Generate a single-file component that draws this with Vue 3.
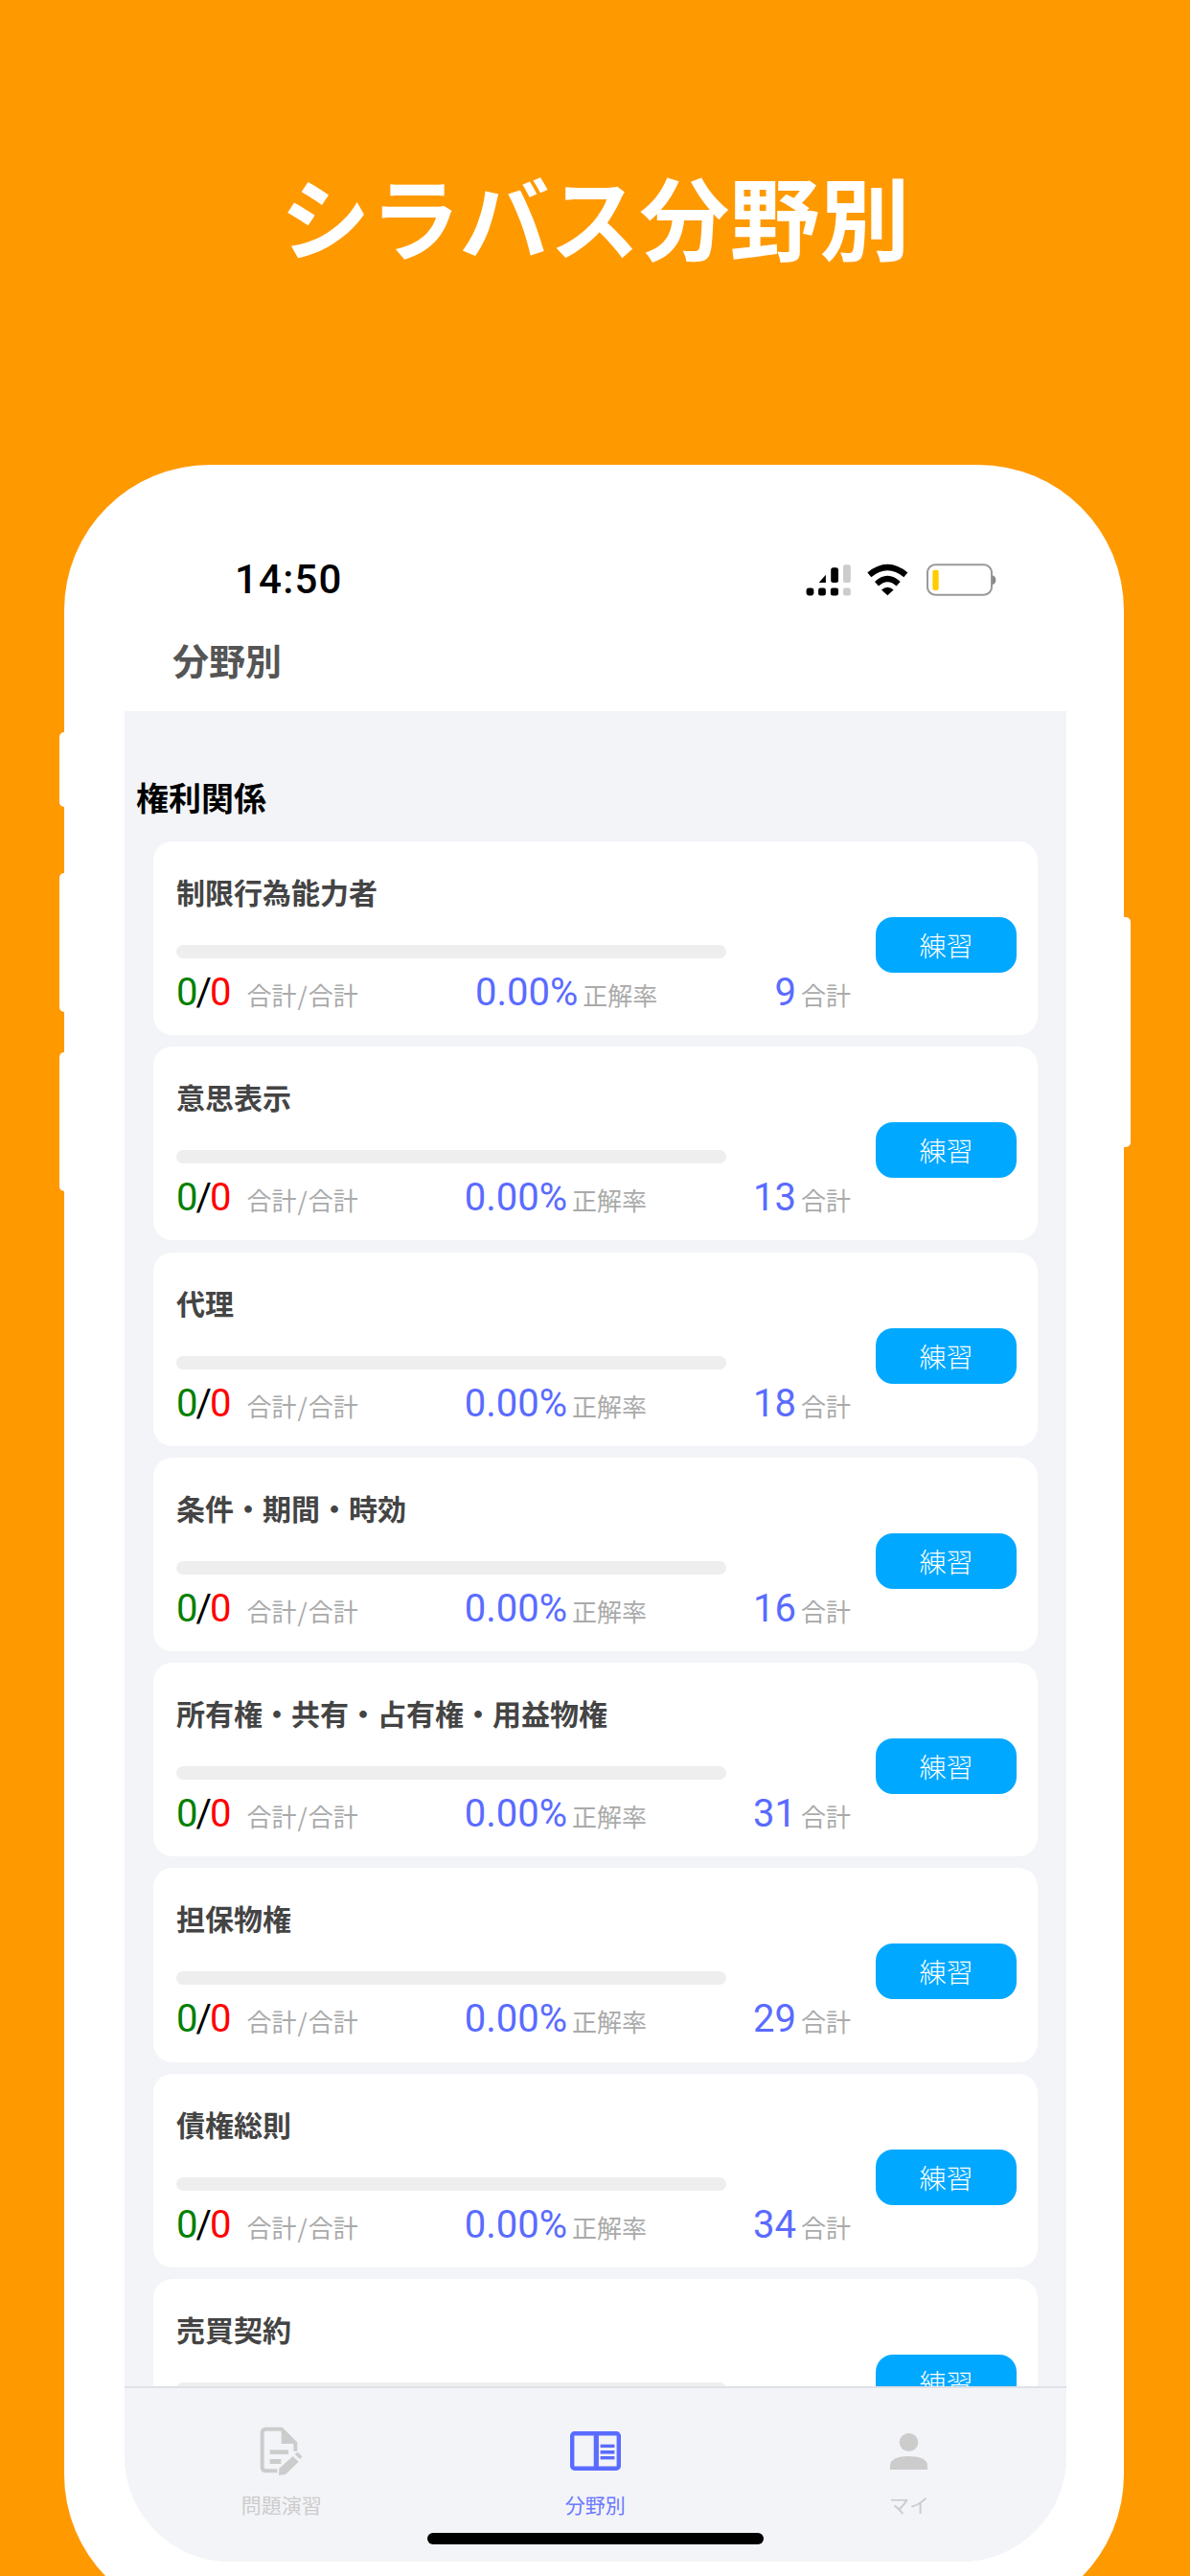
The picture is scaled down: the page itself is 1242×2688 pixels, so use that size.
<script setup>
const topics = [
  { name: '制限行為能力者', total: 9 },
  { name: '意思表示', total: 13 },
  { name: '代理', total: 18 },
  { name: '条件・期間・時効', total: 16 },
  { name: '所有権・共有・占有権・用益物権', total: 31 },
  { name: '担保物権', total: 29 },
  { name: '債権総則', total: 34 },
  { name: '売買契約', total: '' },
]
</script>

<template>
  <div class="page">
    <h1 class="headline">シラバス分野別</h1>
    <div class="phone">
      <i class="side side-a"></i>
      <i class="side side-b"></i>
      <i class="side side-c"></i>
      <i class="side side-r"></i>

      <div class="status">
        <span class="time">14:50</span>
        <div class="status-icons">
          <svg class="i-signal" viewBox="20 30 160 115">
            <rect x="25" y="115" width="25" height="25" rx="9" fill="#000" />
            <rect x="65" y="115" width="25" height="25" rx="7" fill="#000" />
            <rect x="106" y="115" width="26" height="25" rx="7" fill="#000" />
            <rect x="148" y="115" width="25" height="25" rx="6" fill="#ccc" />
            <path d="M67 97 L90 71 V97 Z" fill="#000" />
            <rect x="107" y="47" width="25" height="50" rx="8" fill="#000" />
            <rect x="148" y="37" width="25" height="60" rx="7" fill="#ccc" />
          </svg>
          <svg class="i-wifi" viewBox="220 35 142 107">
            <path d="M233 73 Q290 26 347 73" fill="none" stroke="#000" stroke-width="19" />
            <path d="M256 101 Q290 70 324 101" fill="none" stroke="#000" stroke-width="18" />
            <path d="M271 120 Q290 104 309 120 L290 137 Z" fill="#000" />
          </svg>
          <svg class="i-battery" viewBox="402 35 228 108">
            <rect x="411" y="42" width="201" height="94" rx="24" fill="#fff" stroke="#999" stroke-width="6" />
            <rect x="427" y="58" width="19" height="64" rx="6" fill="#ffcc00" />
            <path d="M614 75 Q625 78 625 90 Q625 102 614 105 Z" fill="#888" />
          </svg>
        </div>
      </div>

      <header class="bar">分野別</header>

      <div class="screen">
        <main class="list">
          <h2 class="section">権利関係</h2>
          <div class="cards">
            <article v-for="t in topics" :key="t.name" class="card">
              <div class="card-main">
                <h3 class="card-title">{{ t.name }}</h3>
                <div class="track"></div>
                <div class="stats">
                  <div class="stat">
                    <span class="num score"><b class="ok">0</b><b class="sl">/</b><b class="ng">0</b></span>
                    <span class="lbl lbl-score">合計<em>/</em>合計</span>
                  </div>
                  <div class="stat">
                    <span class="num">0.00%</span>
                    <span class="lbl">正解率</span>
                  </div>
                  <div class="stat">
                    <span class="num">{{ t.total }}</span>
                    <span class="lbl">合計</span>
                  </div>
                </div>
              </div>
              <button class="go" type="button">練習</button>
            </article>
          </div>
        </main>

        <nav class="tabs">
          <div class="tab">
            <span class="tab-icon">
              <svg class="i-doc" viewBox="460 395 135 156">
                <path d="M515 534 H480 Q468 534 468 522 V415 Q468 403 480 403 H528 L572 447 V472" fill="none" stroke="#ccc" stroke-width="12" />
                <path d="M528 403 L574 449 H528 Z" fill="#ccc" />
                <rect x="492" y="468" width="58" height="14" fill="#ccc" />
                <rect x="492" y="497" width="35" height="15" fill="#ccc" />
                <path d="M520 548 L521 526 L564 488 L582 505 L541 545 Z" fill="#ccc" />
                <path d="M570 481 L579 475 L593 489 L586 497 Z" fill="#ccc" />
              </svg>
            </span>
            <span class="tab-label">問題演習</span>
          </div>
          <div class="tab active">
            <span class="tab-icon">
              <svg class="i-book" viewBox="0 0 53 41">
                <rect x="2.2" y="2.2" width="48.6" height="36.6" rx="2.5" fill="none" stroke="#5a6bff" stroke-width="4.4" />
                <rect x="24.7" y="2" width="5.2" height="37" fill="#5a6bff" />
                <rect x="31.6" y="13.7" width="14.8" height="3.4" fill="#5a6bff" />
                <rect x="31.6" y="20" width="14.8" height="3.6" fill="#5a6bff" />
                <rect x="31.6" y="26" width="14.8" height="3.4" fill="#5a6bff" />
              </svg>
            </span>
            <span class="tab-label">分野別</span>
          </div>
          <div class="tab">
            <span class="tab-icon">
              <svg class="i-user" viewBox="0 0 39 38">
                <ellipse cx="19.5" cy="9.5" rx="9.8" ry="9.5" fill="#ccc" />
                <path d="M0 38 V33.5 C0 27 9 24 19.5 24 C30 24 39 27 39 33.5 V38 Z" fill="#ccc" />
              </svg>
            </span>
            <span class="tab-label">マイ</span>
          </div>
          <i class="home"></i>
        </nav>
      </div>
    </div>
  </div>
</template>

<style>
html, body { margin: 0; padding: 0; }
</style>

<style scoped>
.page {
  width: 1242px;
  height: 2688px;
  overflow: hidden;
  background: #ff9900;
  font-family: "Noto Sans CJK JP", "Noto Sans", sans-serif;
}
.headline {
  box-sizing: border-box;
  height: 485px;
  margin: 0;
  padding-bottom: 38px;
  display: flex;
  align-items: center;
  justify-content: center;
  color: #fff;
  font-size: 94px;
  font-weight: 700;
  line-height: 1;
}
.phone {
  position: relative;
  box-sizing: border-box;
  width: 1106.3px;
  height: 2249px;
  margin-left: 66.7px;
  padding: 101.7px 60.3px 0 63.3px;
  background: #fff;
  border-radius: 152px;
}
.side {
  position: absolute;
  background: #fff;
  width: 12px;
  border-radius: 5px;
}
.side-a { left: -4.7px; top: 279px; height: 78px; }
.side-b { left: -4.7px; top: 426px; height: 145px; }
.side-c { left: -4.7px; top: 613px; height: 145px; }
.side-r { right: -7px; top: 472px; height: 240px; }

.status {
  display: flex;
  align-items: center;
  justify-content: space-between;
  height: 36px;
  padding: 0 72px 0 115px;
}
.time {
  font-family: Roboto, sans-serif;
  font-size: 42px;
  font-weight: 500;
  letter-spacing: 1.2px;
  line-height: 36px;
  color: #000;
}
.status-icons {
  display: flex;
  align-items: center;
  height: 36px;
}
.status-icons svg { display: block; height: 36px; }
.i-signal { width: 50px; margin-right: 13px; }
.i-wifi { width: 47.3px; margin-right: 14px; }
.i-battery { width: 76px; }

.bar {
  box-sizing: border-box;
  height: 119.3px;
  padding: 45px 0 0 50px;
  font-size: 38px;
  line-height: 40px;
  font-weight: 700;
  color: #555;
}

.screen {
  display: flex;
  flex-direction: column;
  height: 1931px;
  overflow: hidden;
  background: #f3f4f8;
  border-radius: 0 0 110px 110px;
}
.list {
  flex: 1;
  min-height: 0;
  overflow: hidden;
}
.section {
  margin: 0;
  padding: 70px 0 0 12px;
  font-size: 34px;
  line-height: 40px;
  font-weight: 700;
  color: #000;
}
.cards {
  display: flex;
  flex-direction: column;
  gap: 12.1px;
  margin: 26px 29.7px 0 30px;
}
.card {
  display: flex;
  box-sizing: border-box;
  height: 202.2px;
  padding: 0 22px 0 24px;
  background: #fff;
  border-radius: 20px;
}
.card-main {
  flex: 1;
  min-width: 0;
  padding-top: 33px;
}
.card-title {
  margin: 0;
  font-size: 30px;
  line-height: 38px;
  font-weight: 700;
  color: #444;
}
.track {
  width: 574px;
  height: 14px;
  margin-top: 37px;
  border-radius: 7px;
  background: #eeeeee;
}
.stats {
  display: flex;
  justify-content: space-between;
  align-items: baseline;
  height: 52px;
  margin-top: 10px;
}
.stat {
  display: flex;
  align-items: baseline;
  gap: 5px;
}
.num {
  font-family: Roboto, sans-serif;
  font-size: 40px;
  line-height: 52px;
  color: #5a6bff;
}
.score b { font-weight: 400; }
.score .ok { color: #008000; }
.score .sl { color: #000; margin: 0 -2px; }
.score .ng { color: #ff0000; }
.lbl {
  font-size: 26px;
  line-height: 30px;
  color: #aaa;
}
.lbl-score { margin-left: 11px; }
.lbl-score em {
  font-style: normal;
  margin: 0 1px;
}
.go {
  flex: none;
  align-self: center;
  width: 147px;
  height: 58px;
  margin: 14px 0 0 26px;
  padding: 0;
  border: 0;
  border-radius: 18px;
  background: #00a8ff;
  color: #fff;
  font-family: inherit;
  font-size: 28px;
  font-weight: 300;
  line-height: 58px;
}

.tabs {
  position: relative;
  box-sizing: border-box;
  flex: none;
  height: 183px;
  display: grid;
  grid-template-columns: repeat(3, 1fr);
  border-top: 2px solid #e0e1e6;
  background: #f3f4f8;
}
.tab {
  display: flex;
  flex-direction: column;
  align-items: center;
  padding-top: 40px;
  color: #ccc;
}
.tab.active { color: #6a79ff; }
.tab-icon {
  display: flex;
  align-items: center;
  justify-content: center;
  height: 52px;
}
.tab-icon svg { display: block; }
.i-doc { width: 45px; height: 52px; }
.i-book { width: 53px; height: 41px; }
.i-user { width: 39px; height: 38px; }
.tab-label {
  margin-top: 14px;
  font-size: 21px;
  line-height: 30px;
}
.home {
  position: absolute;
  left: 316px;
  bottom: 18px;
  width: 351px;
  height: 12px;
  border-radius: 6px;
  background: #000;
}
</style>
